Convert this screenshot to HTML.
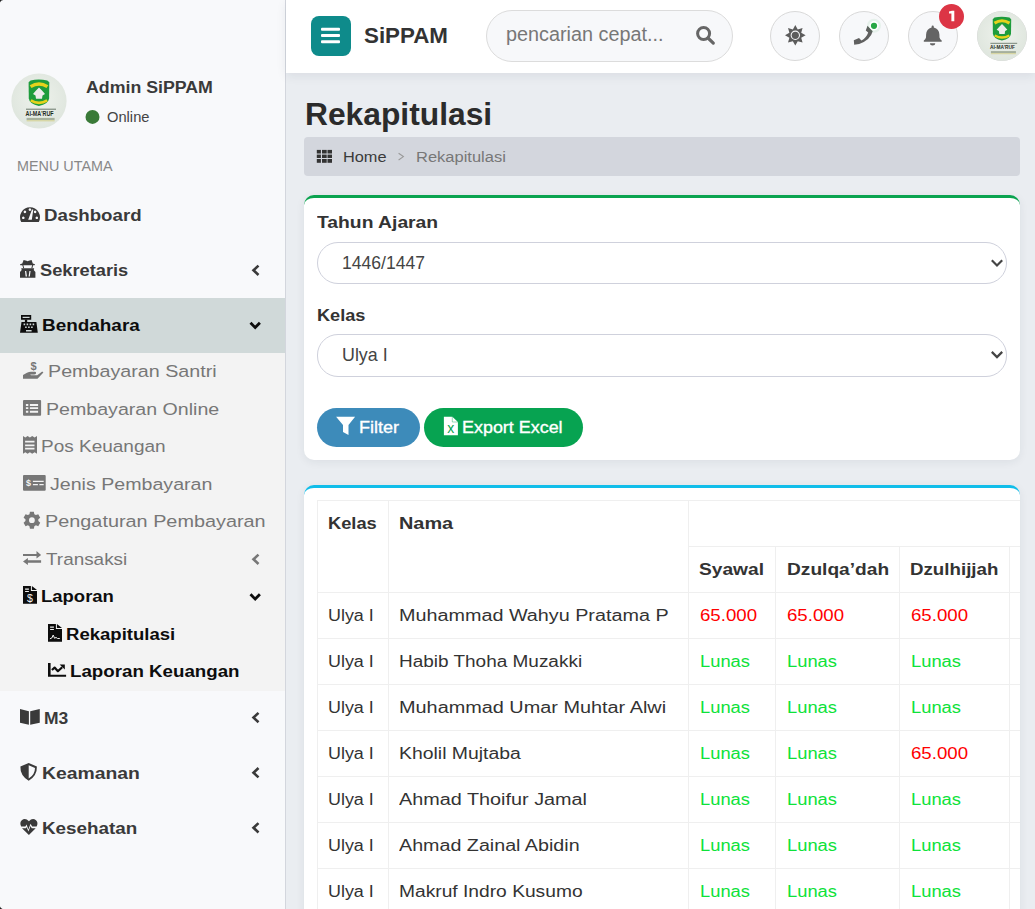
<!DOCTYPE html><html><head><meta charset="utf-8"><style>
*{margin:0;padding:0;box-sizing:border-box}
html,body{width:1035px;height:909px;overflow:hidden}
body{position:relative;background:#eaedf1;font-family:"Liberation Sans",sans-serif;}
.t{position:absolute;white-space:nowrap}
.blk{position:absolute}
.ic{position:absolute}
#sb{position:absolute;left:0;top:0;width:285px;height:909px;background:#f8f9fb}
#hdr{position:absolute;left:286px;top:0;width:749px;height:73px;background:#fff;box-shadow:0 3px 10px rgba(30,40,60,.08)}
.card{position:absolute;background:#fff;border-radius:10px;box-shadow:0 2px 10px rgba(30,40,60,.07)}
</style></head><body><div id="sb"></div>
<div class="blk" style="left:0;top:298px;width:285px;height:55px;background:#d0d9d9"></div>
<div class="blk" style="left:0;top:353px;width:285px;height:338px;background:#f3f3f3"></div>
<div class="blk" style="left:285px;top:0;width:1px;height:909px;background:#d3d6dd"></div>
<div class="t" style="left:86.30px;top:78.80px;font-size:17.4px;line-height:17.4px;letter-spacing:0.000px;color:#3a3a3a;font-weight:700;transform:scaleX(1.0209);transform-origin:0 0;">Admin SiPPAM</div>
<div class="t" style="left:107.10px;top:110.20px;font-size:14.6px;line-height:14.6px;letter-spacing:-0.000px;color:#444;font-weight:400;transform:scaleX(1.0071);transform-origin:0 0;">Online</div>
<div class="t" style="left:17.40px;top:157.50px;font-size:15px;line-height:15px;letter-spacing:0.000px;color:#888;font-weight:400;transform:scaleX(0.9579);transform-origin:0 0;">MENU UTAMA</div>
<div class="t" style="left:44.30px;top:206.80px;font-size:17.4px;line-height:17.4px;letter-spacing:0.000px;color:#3a3a3a;font-weight:700;transform:scaleX(1.0748);transform-origin:0 0;">Dashboard</div>
<div class="t" style="left:40.00px;top:261.80px;font-size:17.4px;line-height:17.4px;letter-spacing:0.000px;color:#3a3a3a;font-weight:700;transform:scaleX(1.0487);transform-origin:0 0;">Sekretaris</div>
<div class="t" style="left:42.00px;top:316.80px;font-size:17.4px;line-height:17.4px;letter-spacing:0.000px;color:#0d0d0d;font-weight:700;transform:scaleX(1.0877);transform-origin:0 0;">Bendahara</div>
<div class="t" style="left:47.60px;top:362.80px;font-size:17.4px;line-height:17.4px;letter-spacing:0.000px;color:#777;font-weight:400;transform:scaleX(1.1330);transform-origin:0 0;">Pembayaran Santri</div>
<div class="t" style="left:45.70px;top:400.80px;font-size:17.4px;line-height:17.4px;letter-spacing:0.000px;color:#777;font-weight:400;transform:scaleX(1.1268);transform-origin:0 0;">Pembayaran Online</div>
<div class="t" style="left:41.20px;top:437.80px;font-size:17.4px;line-height:17.4px;letter-spacing:-0.000px;color:#777;font-weight:400;transform:scaleX(1.0919);transform-origin:0 0;">Pos Keuangan</div>
<div class="t" style="left:49.90px;top:475.80px;font-size:17.4px;line-height:17.4px;letter-spacing:0.000px;color:#777;font-weight:400;transform:scaleX(1.1277);transform-origin:0 0;">Jenis Pembayaran</div>
<div class="t" style="left:45.40px;top:512.80px;font-size:17.4px;line-height:17.4px;letter-spacing:0.000px;color:#777;font-weight:400;transform:scaleX(1.1411);transform-origin:0 0;">Pengaturan Pembayaran</div>
<div class="t" style="left:46.20px;top:550.80px;font-size:17.4px;line-height:17.4px;letter-spacing:0.000px;color:#777;font-weight:400;transform:scaleX(1.0869);transform-origin:0 0;">Transaksi</div>
<div class="t" style="left:40.60px;top:587.80px;font-size:17.4px;line-height:17.4px;letter-spacing:0.000px;color:#0d0d0d;font-weight:700;transform:scaleX(1.0627);transform-origin:0 0;">Laporan</div>
<div class="t" style="left:65.80px;top:625.80px;font-size:17.4px;line-height:17.4px;letter-spacing:-0.000px;color:#0d0d0d;font-weight:700;transform:scaleX(1.0663);transform-origin:0 0;">Rekapitulasi</div>
<div class="t" style="left:70.00px;top:662.80px;font-size:17.4px;line-height:17.4px;letter-spacing:0.000px;color:#0d0d0d;font-weight:700;transform:scaleX(1.0761);transform-origin:0 0;">Laporan Keuangan</div>
<div class="t" style="left:44.30px;top:709.80px;font-size:17.4px;line-height:17.4px;letter-spacing:0.000px;color:#3a3a3a;font-weight:700;transform:scaleX(1.0041);transform-origin:0 0;">M3</div>
<div class="t" style="left:42.00px;top:764.80px;font-size:17.4px;line-height:17.4px;letter-spacing:0.000px;color:#3a3a3a;font-weight:700;transform:scaleX(1.1136);transform-origin:0 0;">Keamanan</div>
<div class="t" style="left:42.00px;top:819.80px;font-size:17.4px;line-height:17.4px;letter-spacing:0.000px;color:#3a3a3a;font-weight:700;transform:scaleX(1.0830);transform-origin:0 0;">Kesehatan</div>
<div id="hdr"></div>
<div class="blk" style="left:311px;top:16px;width:40px;height:40px;border-radius:8px;background:#0e8b8b"></div>
<div class="t" style="left:363.80px;top:24.80px;font-size:22.4px;line-height:22.4px;letter-spacing:0.000px;color:#333;font-weight:700;transform:scaleX(0.9976);transform-origin:0 0;">SiPPAM</div>
<div class="blk" style="left:486px;top:10px;width:247px;height:52px;border-radius:26px;background:#f7f8fa;border:1px solid #dcdcdc"></div>
<div class="t" style="left:506.00px;top:24.75px;font-size:19.5px;line-height:19.5px;letter-spacing:0.000px;color:#777;font-weight:400;transform:scaleX(1.0155);transform-origin:0 0;">pencarian cepat...</div>
<div class="blk" style="left:770px;top:11px;width:50px;height:50px;border-radius:50%;background:#f7f8fa;border:1px solid #d9d9d9"></div>
<div class="blk" style="left:839px;top:11px;width:50px;height:50px;border-radius:50%;background:#f7f8fa;border:1px solid #d9d9d9"></div>
<div class="blk" style="left:908px;top:11px;width:50px;height:50px;border-radius:50%;background:#f7f8fa;border:1px solid #d9d9d9"></div>
<div class="blk" style="left:977px;top:11px;width:50px;height:50px;border-radius:50%;background:#e3e8e2;border:1px solid #d6d6d6"></div>
<div class="blk" style="left:939px;top:4px;width:25px;height:25px;border-radius:50%;background:#dc3545"></div>
<div class="t" style="left:305.40px;top:99.25px;font-size:30.5px;line-height:30.5px;letter-spacing:0.000px;color:#2b2b2b;font-weight:700;transform:scaleX(1.0417);transform-origin:0 0;">Rekapitulasi</div>
<div class="blk" style="left:304px;top:137px;width:716px;height:39px;border-radius:4px;background:#d3d6dd"></div>
<div class="t" style="left:342.50px;top:149.45px;font-size:15.1px;line-height:15.1px;letter-spacing:0.000px;color:#3a3a3a;font-weight:400;transform:scaleX(1.0819);transform-origin:0 0;">Home</div>
<div class="t" style="left:415.60px;top:149.45px;font-size:15.1px;line-height:15.1px;letter-spacing:0.000px;color:#777;font-weight:400;transform:scaleX(1.0923);transform-origin:0 0;">Rekapitulasi</div>
<div class="card" style="left:304px;top:195px;width:716px;height:265px;border-top:3px solid #0aa34f"></div>
<div class="t" style="left:317.30px;top:214.55px;font-size:16.9px;line-height:16.9px;letter-spacing:0.000px;color:#333;font-weight:700;transform:scaleX(1.1423);transform-origin:0 0;">Tahun Ajaran</div>
<div class="blk" style="left:317px;top:242px;width:690px;height:42px;border-radius:21px;border:1px solid #cfd1dc;background:#fff"></div>
<div class="t" style="left:342.00px;top:253.75px;font-size:18.5px;line-height:18.5px;letter-spacing:0.000px;color:#444;font-weight:400;transform:scaleX(0.9486);transform-origin:0 0;">1446/1447</div>
<div class="t" style="left:317.40px;top:307.55px;font-size:16.9px;line-height:16.9px;letter-spacing:-0.000px;color:#333;font-weight:700;transform:scaleX(1.0754);transform-origin:0 0;">Kelas</div>
<div class="blk" style="left:317px;top:334px;width:690px;height:43px;border-radius:21px;border:1px solid #cfd1dc;background:#fff"></div>
<div class="t" style="left:342.10px;top:345.75px;font-size:18.5px;line-height:18.5px;letter-spacing:0.000px;color:#444;font-weight:400;transform:scaleX(0.9641);transform-origin:0 0;">Ulya I</div>
<div class="blk" style="left:317px;top:408px;width:103px;height:39px;border-radius:20px;background:#3d8bba"></div>
<div class="t" style="left:359.20px;top:418.85px;font-size:17.3px;line-height:17.3px;letter-spacing:0.000px;color:#fff;font-weight:400;transform:scaleX(1.0443);transform-origin:0 0;-webkit-text-stroke:0.35px #fff;">Filter</div>
<div class="blk" style="left:424px;top:408px;width:159px;height:39px;border-radius:20px;background:#07a351"></div>
<div class="t" style="left:462.30px;top:418.85px;font-size:17.3px;line-height:17.3px;letter-spacing:0.000px;color:#fff;font-weight:400;transform:scaleX(1.0371);transform-origin:0 0;-webkit-text-stroke:0.35px #fff;">Export Excel</div>
<div class="card" style="left:304px;top:485px;width:716px;height:500px;border-top:3px solid #10bde9"></div>
<div id="tclip" style="position:absolute;left:304px;top:488px;width:716px;height:421px;overflow:hidden">
<div class="blk" style="left:13px;top:12px;width:783px;height:1px;background:#efefef"></div>
<div class="blk" style="left:384px;top:58px;width:412px;height:1px;background:#efefef"></div>
<div class="blk" style="left:13px;top:104px;width:783px;height:1px;background:#efefef"></div>
<div class="blk" style="left:13px;top:150px;width:783px;height:1px;background:#efefef"></div>
<div class="blk" style="left:13px;top:196px;width:783px;height:1px;background:#efefef"></div>
<div class="blk" style="left:13px;top:242px;width:783px;height:1px;background:#efefef"></div>
<div class="blk" style="left:13px;top:288px;width:783px;height:1px;background:#efefef"></div>
<div class="blk" style="left:13px;top:334px;width:783px;height:1px;background:#efefef"></div>
<div class="blk" style="left:13px;top:380px;width:783px;height:1px;background:#efefef"></div>
<div class="blk" style="left:13px;top:12px;width:1px;height:450px;background:#efefef"></div>
<div class="blk" style="left:84px;top:12px;width:1px;height:450px;background:#efefef"></div>
<div class="blk" style="left:384px;top:12px;width:1px;height:450px;background:#efefef"></div>
<div class="blk" style="left:471px;top:58px;width:1px;height:404px;background:#efefef"></div>
<div class="blk" style="left:595px;top:58px;width:1px;height:404px;background:#efefef"></div>
<div class="blk" style="left:705px;top:58px;width:1px;height:404px;background:#efefef"></div>
</div>
<div class="t" style="left:328.20px;top:515.55px;font-size:16.9px;line-height:16.9px;letter-spacing:0.000px;color:#333;font-weight:700;transform:scaleX(1.0820);transform-origin:0 0;">Kelas</div>
<div class="t" style="left:398.80px;top:515.55px;font-size:16.9px;line-height:16.9px;letter-spacing:0.000px;color:#333;font-weight:700;transform:scaleX(1.1775);transform-origin:0 0;">Nama</div>
<div class="t" style="left:699.40px;top:561.55px;font-size:16.9px;line-height:16.9px;letter-spacing:0.000px;color:#333;font-weight:700;transform:scaleX(1.1344);transform-origin:0 0;">Syawal</div>
<div class="t" style="left:786.50px;top:561.55px;font-size:16.9px;line-height:16.9px;letter-spacing:-0.000px;color:#333;font-weight:700;transform:scaleX(1.1332);transform-origin:0 0;">Dzulqa’dah</div>
<div class="t" style="left:910.30px;top:561.55px;font-size:16.9px;line-height:16.9px;letter-spacing:0.000px;color:#333;font-weight:700;transform:scaleX(1.1078);transform-origin:0 0;">Dzulhijjah</div>
<div class="t" style="left:328.40px;top:606.85px;font-size:17.3px;line-height:17.3px;letter-spacing:0.000px;color:#333;font-weight:400;transform:scaleX(1.0362);transform-origin:0 0;">Ulya I</div>
<div class="t" style="left:399.20px;top:606.85px;font-size:17.3px;line-height:17.3px;letter-spacing:0.000px;color:#333;font-weight:400;transform:scaleX(1.1441);transform-origin:0 0;">Muhammad Wahyu Pratama P</div>
<div class="t" style="left:699.50px;top:606.85px;font-size:17.3px;line-height:17.3px;letter-spacing:-0.000px;color:#ff0000;font-weight:400;transform:scaleX(1.0794);transform-origin:0 0;">65.000</div>
<div class="t" style="left:786.60px;top:606.85px;font-size:17.3px;line-height:17.3px;letter-spacing:-0.000px;color:#ff0000;font-weight:400;transform:scaleX(1.0794);transform-origin:0 0;">65.000</div>
<div class="t" style="left:910.50px;top:606.85px;font-size:17.3px;line-height:17.3px;letter-spacing:-0.000px;color:#ff0000;font-weight:400;transform:scaleX(1.0794);transform-origin:0 0;">65.000</div>
<div class="t" style="left:328.40px;top:652.85px;font-size:17.3px;line-height:17.3px;letter-spacing:0.000px;color:#333;font-weight:400;transform:scaleX(1.0362);transform-origin:0 0;">Ulya I</div>
<div class="t" style="left:399.20px;top:652.85px;font-size:17.3px;line-height:17.3px;letter-spacing:0.000px;color:#333;font-weight:400;transform:scaleX(1.0976);transform-origin:0 0;">Habib Thoha Muzakki</div>
<div class="t" style="left:699.50px;top:652.85px;font-size:17.3px;line-height:17.3px;letter-spacing:0.000px;color:#0ee23a;font-weight:400;transform:scaleX(1.0616);transform-origin:0 0;">Lunas</div>
<div class="t" style="left:786.60px;top:652.85px;font-size:17.3px;line-height:17.3px;letter-spacing:0.000px;color:#0ee23a;font-weight:400;transform:scaleX(1.0616);transform-origin:0 0;">Lunas</div>
<div class="t" style="left:910.50px;top:652.85px;font-size:17.3px;line-height:17.3px;letter-spacing:0.000px;color:#0ee23a;font-weight:400;transform:scaleX(1.0616);transform-origin:0 0;">Lunas</div>
<div class="t" style="left:328.40px;top:698.85px;font-size:17.3px;line-height:17.3px;letter-spacing:0.000px;color:#333;font-weight:400;transform:scaleX(1.0362);transform-origin:0 0;">Ulya I</div>
<div class="t" style="left:399.20px;top:698.85px;font-size:17.3px;line-height:17.3px;letter-spacing:0.000px;color:#333;font-weight:400;transform:scaleX(1.1491);transform-origin:0 0;">Muhammad Umar Muhtar Alwi</div>
<div class="t" style="left:699.50px;top:698.85px;font-size:17.3px;line-height:17.3px;letter-spacing:0.000px;color:#0ee23a;font-weight:400;transform:scaleX(1.0616);transform-origin:0 0;">Lunas</div>
<div class="t" style="left:786.60px;top:698.85px;font-size:17.3px;line-height:17.3px;letter-spacing:0.000px;color:#0ee23a;font-weight:400;transform:scaleX(1.0616);transform-origin:0 0;">Lunas</div>
<div class="t" style="left:910.50px;top:698.85px;font-size:17.3px;line-height:17.3px;letter-spacing:0.000px;color:#0ee23a;font-weight:400;transform:scaleX(1.0616);transform-origin:0 0;">Lunas</div>
<div class="t" style="left:328.40px;top:744.85px;font-size:17.3px;line-height:17.3px;letter-spacing:0.000px;color:#333;font-weight:400;transform:scaleX(1.0362);transform-origin:0 0;">Ulya I</div>
<div class="t" style="left:399.20px;top:744.85px;font-size:17.3px;line-height:17.3px;letter-spacing:0.000px;color:#333;font-weight:400;transform:scaleX(1.1224);transform-origin:0 0;">Kholil Mujtaba</div>
<div class="t" style="left:699.50px;top:744.85px;font-size:17.3px;line-height:17.3px;letter-spacing:0.000px;color:#0ee23a;font-weight:400;transform:scaleX(1.0616);transform-origin:0 0;">Lunas</div>
<div class="t" style="left:786.60px;top:744.85px;font-size:17.3px;line-height:17.3px;letter-spacing:0.000px;color:#0ee23a;font-weight:400;transform:scaleX(1.0616);transform-origin:0 0;">Lunas</div>
<div class="t" style="left:910.50px;top:744.85px;font-size:17.3px;line-height:17.3px;letter-spacing:-0.000px;color:#ff0000;font-weight:400;transform:scaleX(1.0794);transform-origin:0 0;">65.000</div>
<div class="t" style="left:328.40px;top:790.85px;font-size:17.3px;line-height:17.3px;letter-spacing:0.000px;color:#333;font-weight:400;transform:scaleX(1.0362);transform-origin:0 0;">Ulya I</div>
<div class="t" style="left:399.20px;top:790.85px;font-size:17.3px;line-height:17.3px;letter-spacing:0.000px;color:#333;font-weight:400;transform:scaleX(1.1469);transform-origin:0 0;">Ahmad Thoifur Jamal</div>
<div class="t" style="left:699.50px;top:790.85px;font-size:17.3px;line-height:17.3px;letter-spacing:0.000px;color:#0ee23a;font-weight:400;transform:scaleX(1.0616);transform-origin:0 0;">Lunas</div>
<div class="t" style="left:786.60px;top:790.85px;font-size:17.3px;line-height:17.3px;letter-spacing:0.000px;color:#0ee23a;font-weight:400;transform:scaleX(1.0616);transform-origin:0 0;">Lunas</div>
<div class="t" style="left:910.50px;top:790.85px;font-size:17.3px;line-height:17.3px;letter-spacing:0.000px;color:#0ee23a;font-weight:400;transform:scaleX(1.0616);transform-origin:0 0;">Lunas</div>
<div class="t" style="left:328.40px;top:836.85px;font-size:17.3px;line-height:17.3px;letter-spacing:0.000px;color:#333;font-weight:400;transform:scaleX(1.0362);transform-origin:0 0;">Ulya I</div>
<div class="t" style="left:399.20px;top:836.85px;font-size:17.3px;line-height:17.3px;letter-spacing:0.000px;color:#333;font-weight:400;transform:scaleX(1.1393);transform-origin:0 0;">Ahmad Zainal Abidin</div>
<div class="t" style="left:699.50px;top:836.85px;font-size:17.3px;line-height:17.3px;letter-spacing:0.000px;color:#0ee23a;font-weight:400;transform:scaleX(1.0616);transform-origin:0 0;">Lunas</div>
<div class="t" style="left:786.60px;top:836.85px;font-size:17.3px;line-height:17.3px;letter-spacing:0.000px;color:#0ee23a;font-weight:400;transform:scaleX(1.0616);transform-origin:0 0;">Lunas</div>
<div class="t" style="left:910.50px;top:836.85px;font-size:17.3px;line-height:17.3px;letter-spacing:0.000px;color:#0ee23a;font-weight:400;transform:scaleX(1.0616);transform-origin:0 0;">Lunas</div>
<div class="t" style="left:328.40px;top:882.85px;font-size:17.3px;line-height:17.3px;letter-spacing:0.000px;color:#333;font-weight:400;transform:scaleX(1.0362);transform-origin:0 0;">Ulya I</div>
<div class="t" style="left:399.20px;top:882.85px;font-size:17.3px;line-height:17.3px;letter-spacing:0.000px;color:#333;font-weight:400;transform:scaleX(1.1112);transform-origin:0 0;">Makruf Indro Kusumo</div>
<div class="t" style="left:699.50px;top:882.85px;font-size:17.3px;line-height:17.3px;letter-spacing:0.000px;color:#0ee23a;font-weight:400;transform:scaleX(1.0616);transform-origin:0 0;">Lunas</div>
<div class="t" style="left:786.60px;top:882.85px;font-size:17.3px;line-height:17.3px;letter-spacing:0.000px;color:#0ee23a;font-weight:400;transform:scaleX(1.0616);transform-origin:0 0;">Lunas</div>
<div class="t" style="left:910.50px;top:882.85px;font-size:17.3px;line-height:17.3px;letter-spacing:0.000px;color:#0ee23a;font-weight:400;transform:scaleX(1.0616);transform-origin:0 0;">Lunas</div>
<svg id="ov" width="1035" height="909" viewBox="0 0 1035 909" style="position:absolute;left:0;top:0"><circle cx="92.5" cy="116.9" r="7" fill="#3a7a38"/>
<path fill="#3a3a3a" fill-rule="evenodd" d="M21.2,222 A10,10 0 1 1 38.8,222 Z M24.9,210.6 a1.3,1.3 0 1 0 0.01,0 Z M29.9,208.3 a1.3,1.3 0 1 0 0.01,0 Z M35.1,210.6 a1.3,1.3 0 1 0 0.01,0 Z M23.3,216.5 a1.3,1.3 0 1 0 0.01,0 Z M36.8,216.5 a1.3,1.3 0 1 0 0.01,0 Z M33.3,209.6 L31.8,219.8 L28.2,219.8 L32,209.4 Z"/>
<path fill="#3a3a3a" d="M23.6,260 L26.5,260.7 L27.6,261.3 L28.7,260.7 L31.6,260 L32.8,263.6 L35,264.2 L34.6,265.2 L20.4,265.2 L20,264.2 L22.3,263.6 Z"/>
<path fill="#3a3a3a" d="M21.2,268.2 L34.2,268.2 L33.7,270 L35.4,272 L35.4,277.8 L20,277.8 L20,272 L21.7,270 Z"/>
<path fill="#f8f9fb" d="M25,271 L26.2,271 L27,276.5 L25.6,276.5 Z M29.4,271 L30.6,271 L29.8,276.5 L28.6,276.5 Z"/>
<path fill="#3a3a3a" d="M22.3,265 L23.3,265 L24.2,268.2 L23.2,268.2 Z M32.2,265 L33.2,265 L32.4,268.2 L31.3,268.2 Z"/>
<path fill="#0d0d0d" fill-rule="evenodd" d="M21,315 h10.2 v4.8 h-10.2 Z M22.6,316.8 h7 v1.2 h-7 Z"/>
<rect fill="#0d0d0d" x="24.9" y="319.6" width="2.3" height="2.6"/>
<path fill="#0d0d0d" fill-rule="evenodd" d="M21.5,322 L36.4,322 L37.8,332.8 L20,332.8 Z M23.6,323.6 h1.6 v1.6 h-1.6 Z M26.6,323.6 h1.6 v1.6 h-1.6 Z M29.6,323.6 h1.6 v1.6 h-1.6 Z M32.6,323.6 h1.6 v1.6 h-1.6 Z M25.1,326.5 h1.6 v1.6 h-1.6 Z M28.1,326.5 h1.6 v1.6 h-1.6 Z M31.1,326.5 h1.6 v1.6 h-1.6 Z M26,330 h5.6 v1.4 h-5.6 Z"/>
<text x="33.5" y="369.8" font-family="Liberation Sans" font-weight="700" font-size="11" text-anchor="middle" fill="#777">$</text>
<path fill="#777" d="M23,375 L27,372.8 Q29,371.8 31,371.8 L35,371.8 Q36.5,372.2 36,373.4 Q35.5,374.4 34,374.4 L30.2,374.4 L31,375.2 L37.2,375.2 L42.2,371.5 L43.4,372.4 L37.5,378.8 L23,378.8 Z"/>
<path fill="#777" fill-rule="evenodd" d="M24,399.9 h16.1 a1,1 0 0 1 1,1 v13.9 a1,1 0 0 1 -1,1 h-16.1 a1,1 0 0 1 -1,-1 v-13.9 a1,1 0 0 1 1,-1 Z M25.9,403.9 h2.4 v2 h-2.4 Z M29.9,403.9 h8.2 v2 h-8.2 Z M25.9,407.2 h2.4 v1.9 h-2.4 Z M29.9,407.2 h8.2 v1.9 h-8.2 Z M25.9,410.7 h2.4 v2 h-2.4 Z M29.9,410.7 h8.2 v2 h-8.2 Z"/>
<path fill="#777" fill-rule="evenodd" d="M23,436 L25.3,437.6 L27.6,436 L29.9,437.6 L32.2,436 L34.6,437.6 L37,436 L37,453.8 L34.6,452.2 L32.2,453.8 L29.9,452.2 L27.6,453.8 L25.3,452.2 L23,453.8 Z M25.1,440.8 h9.4 v1.8 h-9.4 Z M25.1,444.5 h9.4 v1.7 h-9.4 Z M25.1,447.8 h9.4 v1.6 h-9.4 Z"/>
<path fill="#777" fill-rule="evenodd" d="M24,474.9 h20.7 a1,1 0 0 1 1,1 v13.9 a1,1 0 0 1 -1,1 h-20.7 a1,1 0 0 1 -1,-1 v-13.9 a1,1 0 0 1 1,-1 Z M32.9,480.8 h10.8 v1.3 h-10.8 Z M32.9,484 h5 v1.3 h-5 Z M39.4,484 h4.3 v1.3 h-4.3 Z"/>
<text x="28.6" y="486.2" font-family="Liberation Sans" font-weight="700" font-size="9" text-anchor="middle" fill="#f3f3f3">$</text>
<path fill="#777" fill-rule="evenodd" d="M29.94,511.72 L33.86,511.72 L34.33,514.17 L35.90,515.08 L38.26,514.27 L40.22,517.66 L38.34,519.30 L38.34,521.10 L40.22,522.74 L38.26,526.13 L35.90,525.32 L34.33,526.23 L33.86,528.68 L29.94,528.68 L29.47,526.23 L27.90,525.32 L25.54,526.13 L23.58,522.74 L25.46,521.10 L25.46,519.30 L23.58,517.66 L25.54,514.27 L27.90,515.08 L29.47,514.17 Z M34.8,520.2 A2.9,2.9 0 1 0 29.0,520.2 A2.9,2.9 0 1 0 34.8,520.2 Z"/>
<path fill="#777" d="M23,553.9 h13.5 v-3 L41.1,554.9 L36.5,558.5 v-2.6 H23 Z"/>
<path fill="#777" d="M41.1,560.2 h-13.2 v-2.3 L23,561.5 L27.9,565 v-2.2 h13.2 Z"/>
<path fill="#0d0d0d" d="M23,586 h7.9 v4.9 h6.1 v12.9 h-14 Z M31.9,586 L37,589.9 h-5.1 Z"/>
<path fill="#f3f3f3" d="M25.1,588.4 h3.8 v1.4 h-3.8 Z M25.1,590.9 h3.8 v1 h-3.8 Z"/>
<text x="29.9" y="601.8" font-family="Liberation Sans" font-weight="400" font-size="10.5" text-anchor="middle" fill="#f3f3f3">$</text>
<path fill="#0d0d0d" d="M48,624 h7.9 v4.9 h6.1 v12.9 h-14 Z M56.9,624 L62,627.9 h-5.1 Z"/>
<path fill="#f3f3f3" d="M50.1,626.4 h3.8 v1.4 h-3.8 Z M50.1,628.9 h3.8 v1 h-3.8 Z"/>
<path fill="none" stroke="#f3f3f3" stroke-width="1" d="M49.9,638.8 L51.8,638 L53.2,635 L54.6,638.3 L56,637.4 L57.5,638.5 L59.8,638.5"/>
<path fill="#0d0d0d" d="M48,662.9 h2.6 v11.9 h15.5 v2 H48 Z"/>
<path fill="none" stroke="#0d0d0d" stroke-width="2.2" stroke-linejoin="round" d="M51.9,670 L54.6,667.6 L57.9,671.2 L62.2,667.2"/>
<path fill="#0d0d0d" d="M59.6,664.6 L64.8,664.6 L64.8,669.5 Z"/>
<path fill="#3a3a3a" d="M20,708.9 L28.9,711.2 L28.9,724.8 L20,722.8 Z M30.2,711.2 L39.75,708.9 L39.75,722.8 L30.2,724.8 Z"/>
<path fill="#3a3a3a" fill-rule="evenodd" d="M28.7,762.9 L36.9,766.5 Q37.3,775.5 28.7,780.8 Q20,775.5 20.4,766.5 Z M28.7,765.2 L35,767.9 Q35,774.5 28.7,778.5 Z"/>
<path fill="#3a3a3a" d="M21.2,826.6 Q19.2,822.5 21.8,820.2 Q25.3,817.5 28.9,821.2 Q32.5,817.5 36,820.2 Q38.6,822.5 36.6,826.6 L32.2,826.6 L30.5,823.8 L28.4,829.5 L26.5,824.5 L25.4,826.6 Z"/>
<path fill="#3a3a3a" d="M22,828.2 L26,828.2 L26.6,827 L28.4,831.6 L30.6,826 L31.7,828.2 L35.7,828.2 L28.9,835.1 Z"/>
<path fill="none" stroke="#3a3a3a" stroke-width="2.6" stroke-linecap="butt" d="M258.5,265.6 L253.5,270.3 L258.5,275.0"/>
<path fill="none" stroke="#777" stroke-width="2.6" stroke-linecap="butt" d="M258.5,554.5999999999999 L253.5,559.3 L258.5,564.0"/>
<path fill="none" stroke="#3a3a3a" stroke-width="2.6" stroke-linecap="butt" d="M258.5,712.9 L253.5,717.6 L258.5,722.3000000000001"/>
<path fill="none" stroke="#3a3a3a" stroke-width="2.6" stroke-linecap="butt" d="M258.5,768.0 L253.5,772.7 L258.5,777.4000000000001"/>
<path fill="none" stroke="#3a3a3a" stroke-width="2.6" stroke-linecap="butt" d="M258.5,823.0999999999999 L253.5,827.8 L258.5,832.5"/>
<path fill="none" stroke="#0d0d0d" stroke-width="2.8" d="M250.5,322.8 L255.2,327.6 L259.9,322.8"/>
<path fill="none" stroke="#0d0d0d" stroke-width="2.8" d="M250.5,594.3000000000001 L255.2,599.1 L259.9,594.3000000000001"/>
<rect x="321" y="27.8" width="19" height="3" rx="1" fill="#fff"/>
<rect x="321" y="34.0" width="19" height="3" rx="1" fill="#fff"/>
<rect x="321" y="40.2" width="19" height="3" rx="1" fill="#fff"/>
<circle cx="703.6" cy="33.5" r="6" fill="none" stroke="#666" stroke-width="3"/>
<path d="M708,38 L713.3,43.1" stroke="#666" stroke-width="3.2" stroke-linecap="round"/>
<path fill="#5c5c5c" fill-rule="evenodd" d="M795.30,25.00 L797.75,29.39 L802.58,28.02 L801.21,32.85 L805.60,35.30 L801.21,37.75 L802.58,42.58 L797.75,41.21 L795.30,45.60 L792.85,41.21 L788.02,42.58 L789.39,37.75 L785.00,35.30 L789.39,32.85 L788.02,28.02 L792.85,29.39 Z M800.0,35.3 A4.7,4.7 0 1 0 790.5999999999999,35.3 A4.7,4.7 0 1 0 800.0,35.3 Z"/>
<circle cx="795.3" cy="35.3" r="3.6" fill="#5c5c5c"/>
<path fill="#606060" d="M867.5,25.8 L872.7,31.3 Q870.5,40 859.2,44 L854.2,44.7 L853.8,40.2 L859,38 L861.5,40.5 Q866.5,37.5 868.2,32.5 L865.8,30.6 Z"/>
<circle cx="874" cy="25.8" r="7" fill="#28a745" opacity="0.08"/>
<circle cx="874" cy="25.8" r="4.7" fill="#fff"/>
<circle cx="874" cy="25.8" r="3.1" fill="#28a745"/>
<path fill="#646464" d="M932.7,25.6 a1.1,1.1 0 0 1 1.1,1.1 L933.8,27.6 Q939.2,29 939.4,34.5 L939.5,37.6 Q940,39.5 941.7,40.5 L941.7,41.8 L923.8,41.8 L923.8,40.5 Q925.5,39.5 926,37.6 L926.1,34.5 Q926.3,29 931.6,27.6 L931.6,26.7 a1.1,1.1 0 0 1 1.1,-1.1 Z"/>
<path fill="#646464" d="M930,43.2 h5.3 a2.65,2.2 0 0 1 -5.3,0 Z"/>
<path fill="#fff" d="M949,11.5 L952,10.7 L954.3,10.7 L954.3,21.2 L951.4,21.2 L951.4,13.6 L949,13.6 Z"/>
<rect x="316.8" y="149.9" width="4.1" height="3.6" fill="#333"/>
<rect x="316.8" y="154.6" width="4.1" height="3.4" fill="#333"/>
<rect x="316.8" y="159" width="4.1" height="3.8" fill="#333"/>
<rect x="322" y="149.9" width="4.7" height="3.6" fill="#333"/>
<rect x="322" y="154.6" width="4.7" height="3.4" fill="#333"/>
<rect x="322" y="159" width="4.7" height="3.8" fill="#333"/>
<rect x="327.5" y="149.9" width="4.5" height="3.6" fill="#333"/>
<rect x="327.5" y="154.6" width="4.5" height="3.4" fill="#333"/>
<rect x="327.5" y="159" width="4.5" height="3.8" fill="#333"/>
<path fill="none" stroke="#999" stroke-width="1.1" d="M398.6,153.2 L403.4,156.6 L398.6,160"/>
<path fill="none" stroke="#444" stroke-width="2.2" d="M991.8,260.29999999999995 L997,265.5 L1002.2,260.29999999999995"/>
<path fill="none" stroke="#444" stroke-width="2.2" d="M991.8,351.9 L997,357.1 L1002.2,351.9"/>
<path fill="#fff" d="M336.1,416.8 L355.1,416.8 L348.5,424.9 L348.5,435.1 L343,431.9 L343,424.9 Z"/>
<path fill="#fff" d="M443.9,416.8 L452.4,416.8 L457.9,422 L457.9,435.2 L443.9,435.2 Z"/>
<path fill="none" stroke="#07a351" stroke-width="0.7" opacity="0.6" d="M452.3,416.8 L452.3,422 L457.9,422"/>
<text x="450.8" y="433" font-family="Liberation Sans" font-size="14" text-anchor="middle" fill="#07a351">x</text>
<path fill="#222" d="M0,0 L3.2,0 Q0.6,0.4 0,2.6 Z"/>
<path fill="#222" d="M0,909 L2.6,909 Q0.5,908.2 0,906.4 Z"/><g transform="translate(11,73) scale(1.0000)">
<defs><radialGradient id="lg1" cx="50%" cy="45%" r="55%"><stop offset="0" stop-color="#eef2ec"/><stop offset="1" stop-color="#dfe6de"/></radialGradient></defs>
<circle cx="28" cy="28" r="27.6" fill="url(#lg1)"/>
<path fill="#1e9c3c" d="M17.6,9.2 L19.6,7.4 Q27.5,5.6 36.3,7.4 L38.3,9.2 L38.1,25.5 Q37.3,31.2 27.9,33 Q18.5,31.2 17.8,25.5 Z"/>
<path fill="none" stroke="#e6d21c" stroke-width="3.4" d="M19.6,13.6 Q28,8.2 36.4,13.6"/>
<path fill="none" stroke="#e6d21c" stroke-width="2.8" d="M19.8,27.4 Q28,32.2 36.2,27.4"/>
<path fill="#ececea" d="M28,14.5 L31,17.5 L34,21 L31.5,22.5 L31,25.7 L25,25.7 L24.5,22.5 L22,21 L25,17.5 Z"/>
<rect x="15" y="35.6" width="30" height="1.3" fill="#3a4a3a" opacity="0.55"/>
<text x="28.6" y="43" font-family="Liberation Sans" font-weight="700" font-size="6.8" text-anchor="middle" fill="#1e2a1e" textLength="28" lengthAdjust="spacingAndGlyphs">AI-MA'RUF</text>
<rect x="15.6" y="44.9" width="28" height="2.2" fill="#5a6a4a" opacity="0.45"/>
<rect x="15.6" y="47.1" width="28" height="1.3" fill="#d6d49a" opacity="0.9"/>
</g><g transform="translate(977,11) scale(0.8929)">
<defs><radialGradient id="lg2" cx="50%" cy="45%" r="55%"><stop offset="0" stop-color="#eef2ec"/><stop offset="1" stop-color="#dfe6de"/></radialGradient></defs>
<circle cx="28" cy="28" r="27.6" fill="url(#lg2)"/>
<path fill="#1e9c3c" d="M17.6,9.2 L19.6,7.4 Q27.5,5.6 36.3,7.4 L38.3,9.2 L38.1,25.5 Q37.3,31.2 27.9,33 Q18.5,31.2 17.8,25.5 Z"/>
<path fill="none" stroke="#e6d21c" stroke-width="3.4" d="M19.6,13.6 Q28,8.2 36.4,13.6"/>
<path fill="none" stroke="#e6d21c" stroke-width="2.8" d="M19.8,27.4 Q28,32.2 36.2,27.4"/>
<path fill="#ececea" d="M28,14.5 L31,17.5 L34,21 L31.5,22.5 L31,25.7 L25,25.7 L24.5,22.5 L22,21 L25,17.5 Z"/>
<rect x="15" y="35.6" width="30" height="1.3" fill="#3a4a3a" opacity="0.55"/>
<text x="28.6" y="43" font-family="Liberation Sans" font-weight="700" font-size="6.8" text-anchor="middle" fill="#1e2a1e" textLength="28" lengthAdjust="spacingAndGlyphs">AI-MA'RUF</text>
<rect x="15.6" y="44.9" width="28" height="2.2" fill="#5a6a4a" opacity="0.45"/>
<rect x="15.6" y="47.1" width="28" height="1.3" fill="#d6d49a" opacity="0.9"/>
</g></svg></body></html>
